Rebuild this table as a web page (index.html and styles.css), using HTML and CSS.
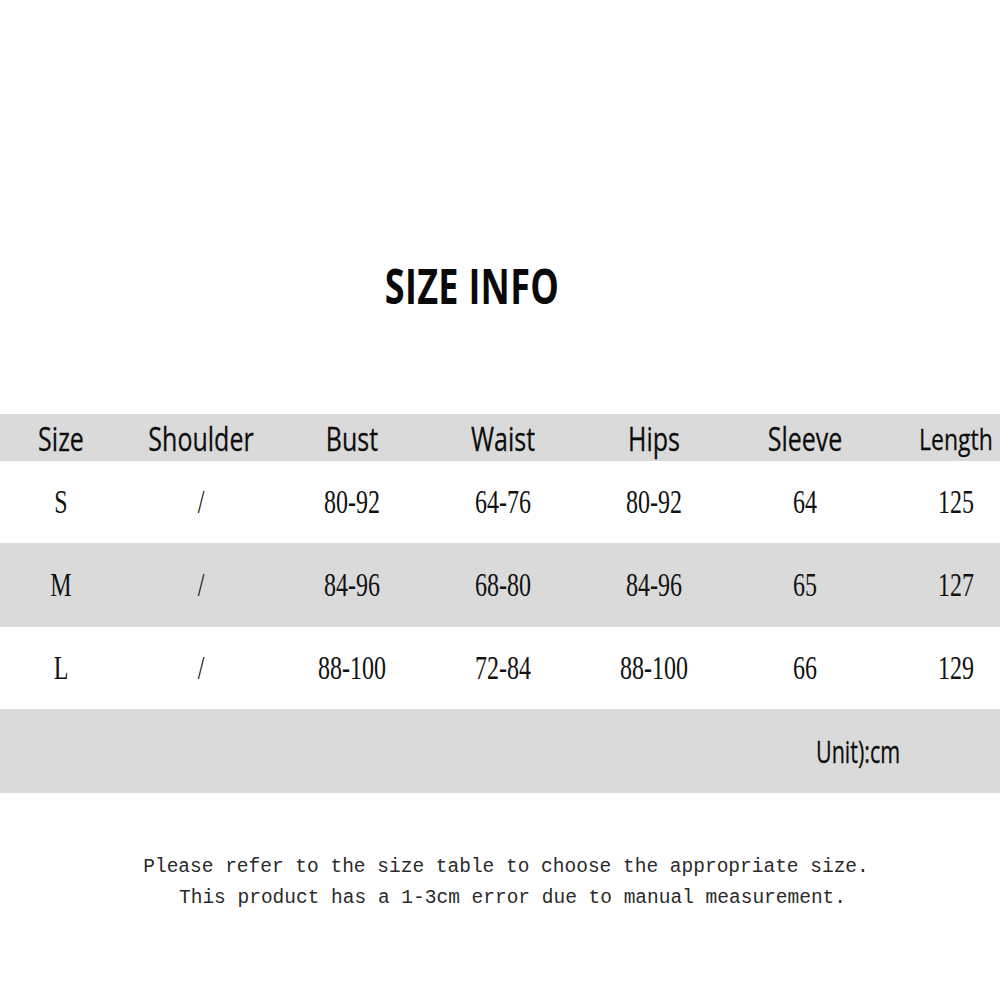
FILE: index.html
```html
<!DOCTYPE html>
<html>
<head>
<meta charset="utf-8">
<link rel="stylesheet" href="styles.css">
</head>
<body>
<div class="page">
  <h1 class="title"><span class="stretch">SIZE INFO</span></h1>
  <div class="table">
    <div class="row head">
      <div class="cell"><span class="sans">Size</span></div>
      <div class="cell"><span class="sans">Shoulder</span></div>
      <div class="cell"><span class="sans">Bust</span></div>
      <div class="cell"><span class="sans">Waist</span></div>
      <div class="cell"><span class="sans">Hips</span></div>
      <div class="cell"><span class="sans">Sleeve</span></div>
      <div class="cell last"><span class="sans small">Length</span></div>
    </div>
    <div class="row body white">
      <div class="cell"><span class="serif">S</span></div>
      <div class="cell"><span class="serif">/</span></div>
      <div class="cell"><span class="serif">80-92</span></div>
      <div class="cell"><span class="serif">64-76</span></div>
      <div class="cell"><span class="serif">80-92</span></div>
      <div class="cell"><span class="serif">64</span></div>
      <div class="cell last"><span class="serif">125</span></div>
    </div>
    <div class="row body grey tall">
      <div class="cell"><span class="serif">M</span></div>
      <div class="cell"><span class="serif">/</span></div>
      <div class="cell"><span class="serif">84-96</span></div>
      <div class="cell"><span class="serif">68-80</span></div>
      <div class="cell"><span class="serif">84-96</span></div>
      <div class="cell"><span class="serif">65</span></div>
      <div class="cell last"><span class="serif">127</span></div>
    </div>
    <div class="row body white">
      <div class="cell"><span class="serif">L</span></div>
      <div class="cell"><span class="serif">/</span></div>
      <div class="cell"><span class="serif">88-100</span></div>
      <div class="cell"><span class="serif">72-84</span></div>
      <div class="cell"><span class="serif">88-100</span></div>
      <div class="cell"><span class="serif">66</span></div>
      <div class="cell last"><span class="serif">129</span></div>
    </div>
    <div class="unit-row">
      <span class="sans unit">Unit):cm</span>
    </div>
  </div>
  <div class="notes">
    <p class="note">Please refer to the size table to choose the appropriate size.</p>
    <p class="note second">This product has a 1-3cm error due to manual measurement.</p>
  </div>
</div>
</body>
</html>
```

FILE: styles.css
```css
html, body {
  margin: 0;
  padding: 0;
  background: #ffffff;
}

.page {
  width: 1000px;
  height: 1000px;
  overflow: hidden;
  color: #111;
}

.title {
  margin: 0;
  padding-top: 256px;
  padding-right: 56px;
  height: 60px;
  line-height: 60px;
  text-align: center;
  font-family: "Open Sans", "Liberation Sans", sans-serif;
  font-weight: 700;
  font-size: 36px;
  color: #0a0a0a;
  margin-bottom: 98px;
}

.stretch {
  display: inline-block;
  transform: scaleY(1.36);
  letter-spacing: 0.3px;
}

.table {
  width: 1000px;
}

.row {
  display: grid;
  grid-template-columns: 122px 158px 144px 158px 144px 158px 116px;
  align-items: center;
}

.head {
  height: 47px;
  background: #dadada;
}

.body {
  height: 82px;
}

.tall {
  height: 84px;
}

.white {
  background: #ffffff;
}

.grey {
  background: #dadada;
}

.cell {
  display: flex;
  justify-content: center;
  align-items: center;
}

.cell.last {
  padding-left: 28px;
}

.sans {
  display: inline-block;
  font-family: "Open Sans", "Liberation Sans", sans-serif;
  font-size: 25px;
  line-height: 30px;
  color: #0d0d0d;
  transform: scaleY(1.28);
  -webkit-text-stroke: 0.2px #0d0d0d;
}

.sans.small {
  font-size: 23px;
}

.sans.unit {
  font-size: 21.5px;
  transform: scaleY(1.48);
}

.serif {
  display: inline-block;
  font-family: "Liberation Serif", "Times New Roman", serif;
  font-size: 24px;
  line-height: 30px;
  color: #111;
  transform: scaleY(1.38);
}

.unit-row {
  height: 84px;
  background: #dadada;
  display: flex;
  align-items: center;
  padding-left: 816px;
  box-sizing: border-box;
}

.notes {
  margin-top: 59px;
  text-align: center;
}

.note {
  margin: 0;
  font-family: "Liberation Mono", "Courier New", monospace;
  font-size: 19.5px;
  line-height: 31px;
  color: #2a2a2a;
  padding-left: 12px;
}

.note.second {
  padding-left: 25px;
}
```
